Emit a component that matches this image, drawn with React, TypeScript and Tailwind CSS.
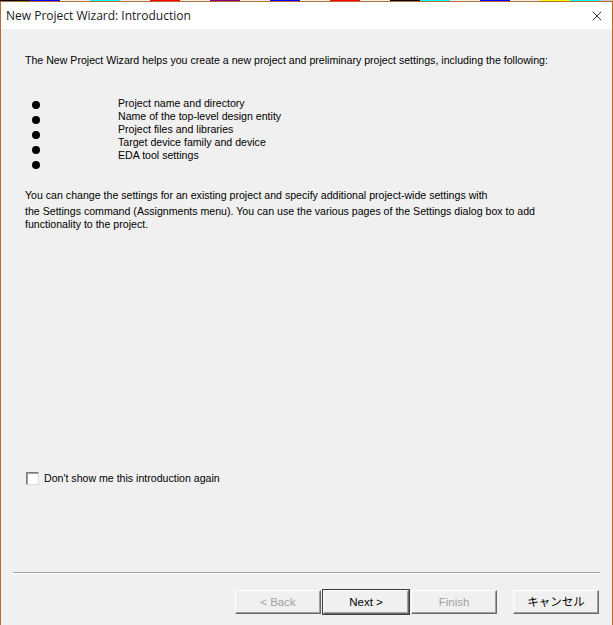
import { X } from "lucide-react";

const items = [
  "Project name and directory",
  "Name of the top-level design entity",
  "Project files and libraries",
  "Target device family and device",
  "EDA tool settings",
];

const strip = [
  "#000", "#00f", "#f0f0f0", "#0ff", "#f0f0f0", "#f00", "#f0f0f0", "#800080", "#f0f0f0", "#00f",
  "#f0f0f0", "#f00", "#f0f0f0", "#000", "#0ff", "#f0f0f0", "#00f", "#f0f0f0", "#ff0", "#0ff",
];

function Button({ label, disabled, primary }: { label: string; disabled?: boolean; primary?: boolean }) {
  return (
    <div className={primary ? "border border-[#3c3c3c]" : "border border-transparent"}>
      <div className="w-[86px] h-[24px] flex items-center justify-center bg-[#f0f0f0] border-t border-l border-t-white border-l-white border-b border-r border-b-[#696969] border-r-[#696969] shadow-[inset_-1px_-1px_0_#a0a0a0]">
        <span className={disabled ? "text-[#a0a0a0]" : "text-black"}>{label}</span>
      </div>
    </div>
  );
}

export default function App() {
  return (
    <div className="w-[613px] h-[625px] flex flex-col bg-[#f0f0f0] text-[10.6px] leading-[13px] text-black font-['Liberation_Sans','Noto_Sans_CJK_JP',sans-serif] overflow-hidden">
      <div className="h-[1px] flex bg-[#c8c8c8]">
        {strip.map((c, i) => (
          <div key={i} className="w-[30px] h-[1px]" style={{ backgroundColor: c }} />
        ))}
      </div>
      <div className="flex-1 flex flex-col border-l border-r border-t border-[#b86a30]">
        <div className="h-[27px] bg-white flex items-center justify-between pl-[5px] pr-[7px]">
          <span className="text-[12px] font-['Open_Sans',sans-serif] text-[#1a1a1a]">New Project Wizard: Introduction</span>
          <X size={16} strokeWidth={1.2} className="text-black" />
        </div>
        <div className="flex-1 flex flex-col px-[24px] pt-[25px]">
          <p>The New Project Wizard helps you create a new project and preliminary project settings, including the following:</p>
          <div className="flex mt-[30px]">
            <div className="w-[93px] pl-[7px] flex flex-col">
              {[0, 1, 2, 3, 4].map((i) => (
                <div key={i} className="h-[15px] flex items-center">
                  <div className="w-[8px] h-[8px] bg-black rounded-full" />
                </div>
              ))}
            </div>
            <div className="flex flex-col">
              {items.map((t) => (
                <div key={t} className="h-[13px]">{t}</div>
              ))}
            </div>
          </div>
          <p className="mt-[17px]">You can change the settings for an existing project and specify additional project-wide settings with</p>
          <p className="mt-[3px]">
            the Settings command (Assignments menu). You can use the various pages of the Settings dialog box to add
            <br />
            functionality to the project.
          </p>
          <div className="flex-1" />
          <label className="flex items-center gap-[5px] mb-[87px] ml-[1px]">
            <span className="w-[13px] h-[13px] bg-white border-t border-l border-[#7a7a7a] border-b border-r border-b-[#dcdcdc] border-r-[#dcdcdc] shadow-[inset_1px_1px_0_#a0a0a0]" />
            <span>Don't show me this introduction again</span>
          </label>
        </div>
        <div className="mx-[12px] h-[2px] border-t border-[#a0a0a0] border-b border-b-white" />
        <div className="flex justify-end items-center pr-[12px] pt-[15px] pb-[10px] text-[11.5px]">
          <div className="flex">
            <Button label="< Back" disabled />
            <Button label="Next >" primary />
            <Button label="Finish" disabled />
          </div>
          <div className="ml-[14px]">
            <Button label="キャンセル" />
          </div>
        </div>
      </div>
    </div>
  );
}
